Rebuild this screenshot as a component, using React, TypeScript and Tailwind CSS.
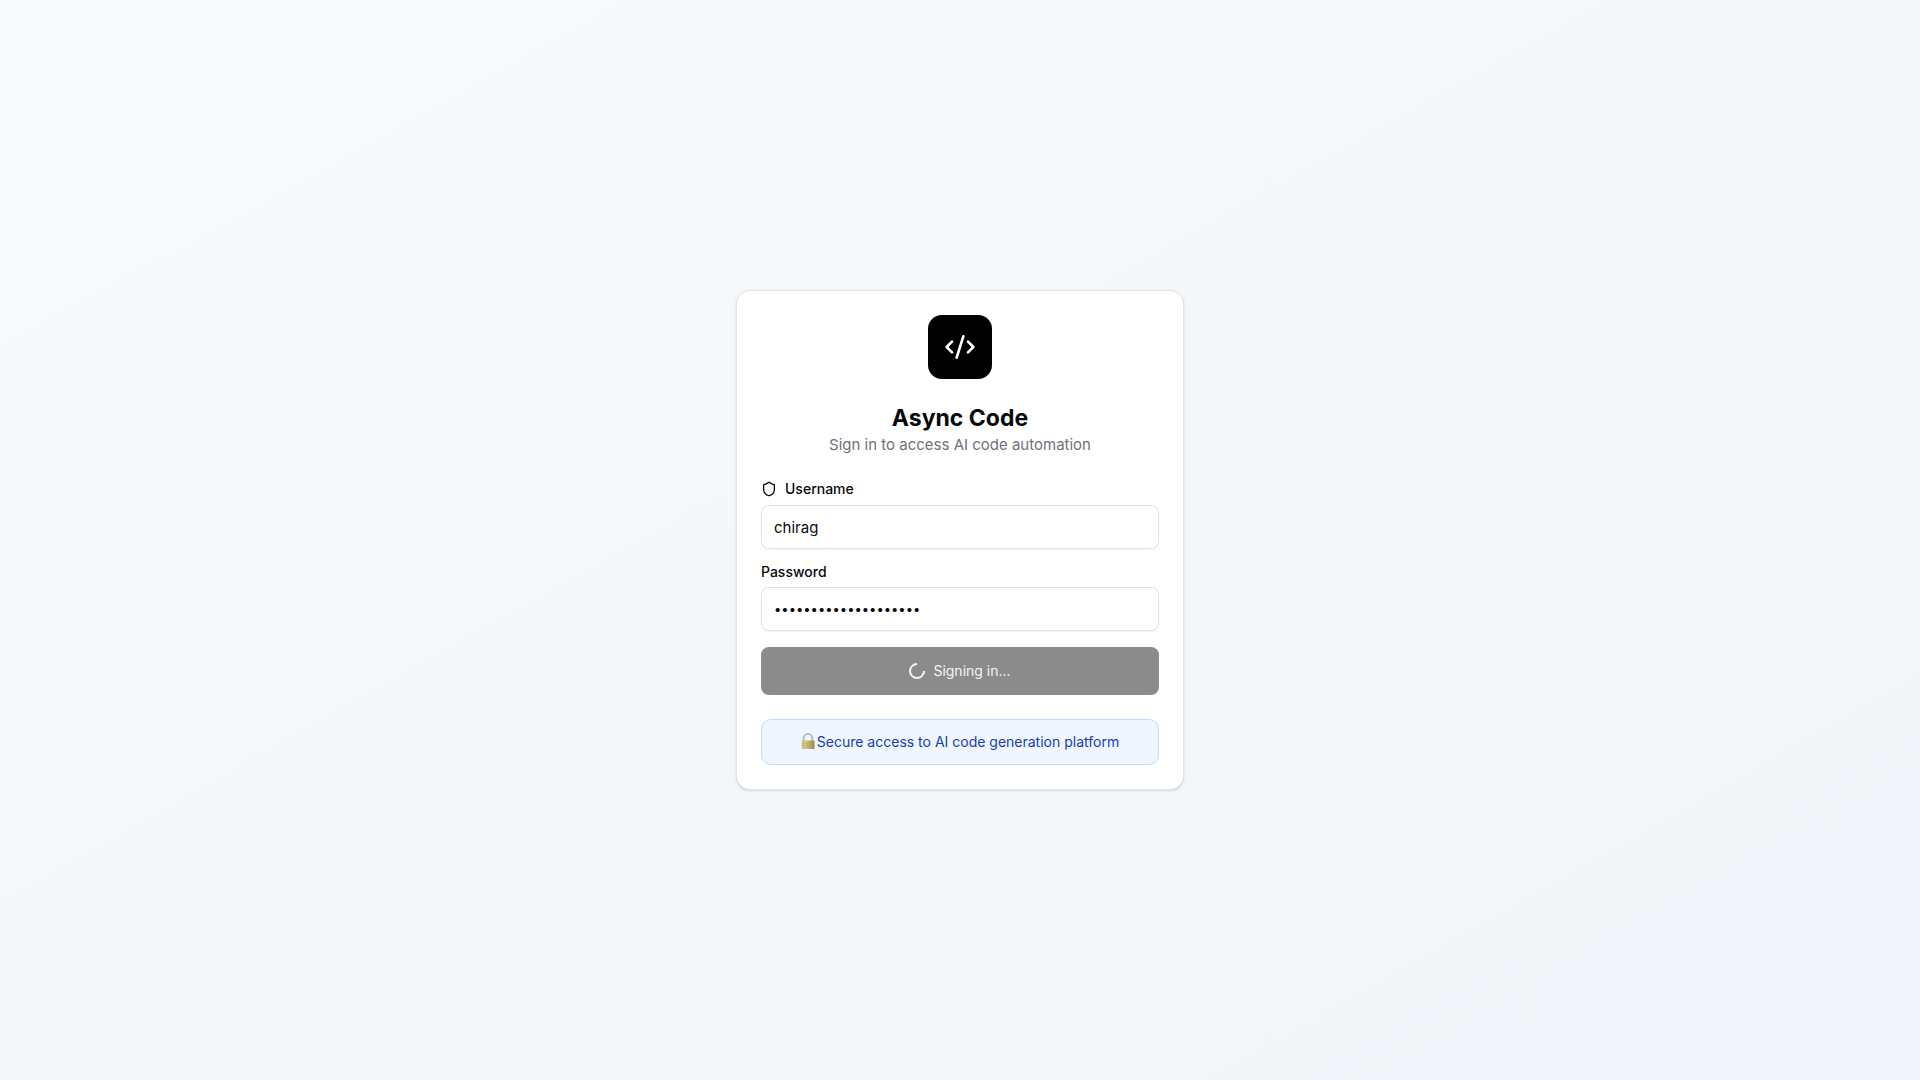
import { CodeXml, Shield } from "lucide-react";

function LockGlyph() {
  return (
    <svg viewBox="0 0 14 18" className="h-[18px] w-[14px] shrink-0" aria-hidden="true">
      <defs>
        <linearGradient id="body" x1="0" x2="1" y1="0" y2="0">
          <stop offset="0" stopColor="#cdc68a" />
          <stop offset="0.35" stopColor="#cdc67e" />
          <stop offset="1" stopColor="#958a48" />
        </linearGradient>
      </defs>
      <path d="M2.6 8V5.4a4.4 4.6 0 0 1 8.8 0V8" fill="none" stroke="#a9b2b5" strokeWidth="1.6" />
      <rect x="0.5" y="7.5" width="13" height="8.5" rx="0.8" fill="url(#body)" />
      <path d="M1 10.5h12M1 13h12" stroke="#a29a50" strokeOpacity="0.4" strokeWidth="0.7" />
    </svg>
  );
}

const inputClass =
  "h-11 w-full rounded-lg border border-zinc-200 bg-white px-3 text-zinc-950 shadow-xs outline-none";

export default function App() {
  return (
    <main className="flex min-h-screen items-center justify-center bg-linear-to-br from-slate-50 to-slate-100 p-4 font-['Inter',sans-serif] text-zinc-950">
      <section className="w-full max-w-md rounded-[14px] border border-zinc-200 bg-white p-6 shadow-sm">
        <header className="mb-6 flex flex-col items-center text-center">
          <div className="mb-6 flex size-16 items-center justify-center rounded-[14px] bg-black text-white">
            <CodeXml className="size-8" />
          </div>
          <h1 className="text-[23px] leading-[30px] font-bold">Async Code</h1>
          <p className="text-[15px] leading-6 text-zinc-500">Sign in to access AI code automation</p>
        </header>
        <form className="flex flex-col gap-4" onSubmit={(e) => e.preventDefault()}>
          <div className="flex flex-col gap-2">
            <label htmlFor="username" className="flex items-center gap-2 text-sm leading-none font-medium">
              <Shield className="size-4" />
              Username
            </label>
            <input id="username" type="text" defaultValue="chirag" className={`${inputClass} text-[15px]`} />
          </div>
          <div className="flex flex-col gap-2">
            <label htmlFor="password" className="text-sm leading-none font-medium">
              Password
            </label>
            <input
              id="password"
              type="password"
              defaultValue="abcdefghijklmnopqrst"
              className={`${inputClass} text-[13px]`}
            />
          </div>
          <button
            type="submit"
            disabled
            className="flex h-12 w-full items-center justify-center gap-2 rounded-lg bg-[#8b8b8c] text-sm text-zinc-100"
          >
            <span className="size-4 rotate-45 rounded-full border-2 border-zinc-100 border-t-transparent" />
            Signing in...
          </button>
        </form>
        <p className="mt-6 flex items-center justify-center gap-0.5 rounded-[10px] border border-blue-200 bg-blue-50 p-3 text-sm text-blue-800">
          <LockGlyph />
          Secure access to AI code generation platform
        </p>
      </section>
    </main>
  );
}
